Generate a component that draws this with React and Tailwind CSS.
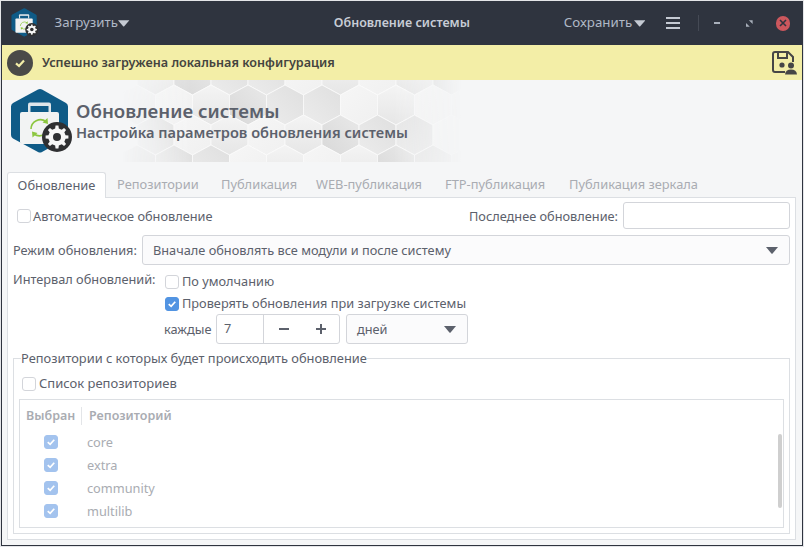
const gearPath = (cx, cy, r, teeth = 8) => {
    const pts = [];
    const step = (Math.PI * 2) / teeth;
    for (let i = 0; i < teeth; i++) {
        const a = i * step;
        const w = step * 0.2;
        pts.push([a - w * 1.35, r * 0.76], [a - w * 0.8, r], [a + w * 0.8, r], [a + w * 1.35, r * 0.76]);
    }
    const d = pts
        .map(([a, rad], i) => `${i ? "L" : "M"}${(cx + Math.cos(a) * rad).toFixed(2)} ${(cy + Math.sin(a) * rad).toFixed(2)}`)
        .join(" ");
    return d + " Z";
};

// the hexagon with bag, sync arrows and gear
const AppIcon = ({ className }) => (
    <svg viewBox="0 0 62 66" className={className}>
        <path d="M28 1.5 Q30 .5 32 1.5 L56 15 Q58 16 58 18.5 L58 47 Q58 49.5 56 50.5 L32 64 Q30 65 28 64 L3 50.5 Q1 49.5 1 47 L1 18.5 Q1 16 3 15 Z" fill="#0f5b87" />
        <path d="M18 24 V16.5 Q18 14.5 20 14.5 H39 Q41 14.5 41 16.5 V24" fill="#dfe6ea" />
        <rect x="20.5" y="18" width="18" height="6" fill="#0f5b87" />
        <rect x="10" y="24" width="39" height="32" rx="2" fill="#f2f3f3" />
        <path d="M21 41 A9.5 9.5 0 0 1 36 33.5" fill="none" stroke="#8cc63f" strokeWidth="1.6" />
        <path d="M39 38 A9.5 9.5 0 0 1 24 46" fill="none" stroke="#8cc63f" strokeWidth="1.6" />
        <path d="M37.5 30 L38 36 L32.5 34.5 Z M22.5 49.5 L22 43.5 L27.5 45 Z" fill="#8cc63f" />
        <circle cx="47" cy="49" r="15" fill="#2f3032" />
        <path d={gearPath(47, 49, 11.5)} fill="#f7f7f7" />
        <circle cx="47" cy="49" r="4" fill="#2f3032" />
    </svg>
);

// grey hexagon wallpaper behind the banner title
const fills = ["url(#hexA)", "url(#hexB)", "url(#hexC)", "url(#hexA)", "url(#hexD)", "url(#hexB)", "url(#hexD)"];
const hexes = [];
[75, 105, 135, 165].forEach((y, row) => {
    for (let i = 0; i < 10; i++) {
        hexes.push({ x: 135 + (row % 2 ? 0 : 18.5) + i * 37, y, fill: fills[(i * 2 + row * 3) % fills.length] });
    }
});

const hexPoints = (x, y) => {
    const w = 18.5, h = 20;
    return `${x},${y - h} ${x + w},${y - h / 2} ${x + w},${y + h / 2} ${x},${y + h} ${x - w},${y + h / 2} ${x - w},${y - h / 2}`;
};

const Wallpaper = () => (
    <svg viewBox="120 80 340 82" className="absolute left-[120px] top-0 w-[340px] h-[82px]">
        <defs>
            <linearGradient id="fade" x1="0" x2="1" y1="0" y2="0">
                <stop offset="0" stopColor="white" stopOpacity="0" />
                <stop offset="0.2" stopColor="white" stopOpacity="1" />
                <stop offset="0.8" stopColor="white" stopOpacity="1" />
                <stop offset="1" stopColor="white" stopOpacity="0" />
            </linearGradient>
            <linearGradient id="hexA" x1="0" x2="0" y1="0" y2="1">
                <stop offset="0" stopColor="#f4f4f4" />
                <stop offset="1" stopColor="#e6e6e6" />
            </linearGradient>
            <linearGradient id="hexB" x1="0" x2="1" y1="0" y2="1">
                <stop offset="0" stopColor="#f6f6f6" />
                <stop offset="1" stopColor="#f0f0f0" />
            </linearGradient>
            <linearGradient id="hexC" x1="1" x2="0" y1="0" y2="1">
                <stop offset="0" stopColor="#e9e9e9" />
                <stop offset="1" stopColor="#d8d8d8" />
            </linearGradient>
            <linearGradient id="hexD" x1="0" x2="1" y1="1" y2="0">
                <stop offset="0" stopColor="#ececec" />
                <stop offset="1" stopColor="#dfdfdf" />
            </linearGradient>
            <mask id="fadeMask">
                <rect x="120" y="80" width="340" height="82" fill="url(#fade)" />
            </mask>
        </defs>
        <g mask="url(#fadeMask)">
            {hexes.map((h) => (
                <polygon key={`${h.x}-${h.y}`} points={hexPoints(h.x, h.y)} fill={h.fill} stroke="#fafafa" strokeWidth="0.8" />
            ))}
        </g>
    </svg>
);

const Caret = ({ className }) => (
    <svg viewBox="0 0 12 7" className={className}>
        <path d="M0 0 H12 L6.6 6.4 Q6 7 5.4 6.4 Z" fill="currentColor" />
    </svg>
);

const Check = ({ checked, dim, className = "" }) => (
    <span
        className={`flex items-center justify-center w-[14px] h-[14px] rounded-[3px] shrink-0 border ${
            checked
                ? dim
                    ? "bg-[#a3c3ee] border-[#a3c3ee]"
                    : "bg-[#5294e2] border-[#5294e2]"
                : "bg-white border-[#d3d5da]"
        } ${className}`}
    >
        {checked && (
            <svg viewBox="0 0 14 14" className="w-[12px] h-[12px]">
                <path d="M3.2 7.2 L6 9.8 L10.8 4.4" fill="none" stroke="white" strokeWidth="2" />
            </svg>
        )}
    </span>
);

const tabs = [
    { label: "Репозитории", width: "w-[104px]" },
    { label: "Публикация", width: "w-[95px]" },
    { label: "WEB-публикация", width: "w-[129px]" },
    { label: "FTP-публикация", width: "w-[124px]" },
    { label: "Публикация зеркала", width: "w-[147px]" },
];
const repos = ["core", "extra", "community", "multilib"];

export default function App() {
    return (
        <div className="w-[804px] h-[547px] p-px bg-[#e4e5e8]">
            <div
                className="h-full overflow-hidden flex flex-col bg-[#f5f6f7] text-[#5c616c] text-[12.75px] border-l border-r border-b border-[#2f343f]"
                style={{ fontFamily: '"Noto Sans", sans-serif' }}
            >
                {/* Title bar */}
                <header className="h-[44px] shrink-0 bg-[#2f343f] flex items-center pl-[9px] pr-[12px] text-[#afb8c6]">
                    <AppIcon className="w-[29px] h-[31px] mb-[1px]" />
                    <span className="ml-[16px] w-[62px] text-[13.3px] whitespace-nowrap">Загрузить</span>
                    <Caret className="w-[12px] h-[7px] ml-[2px] text-[#c5cad3]" />
                    <span className="ml-[204px] w-[135px] text-center whitespace-nowrap text-[12.5px] font-semibold text-[#c7ccd5]">Обновление системы</span>
                    <span className="ml-[95px] w-[68px] text-[13.3px] whitespace-nowrap">Сохранить</span>
                    <Caret className="w-[12px] h-[7px] ml-[2px] text-[#c5cad3]" />
                    <div className="ml-[21px] w-[14px] flex flex-col gap-[3px]">
                        <span className="h-[2px] bg-[#c5cad3]" />
                        <span className="h-[2px] bg-[#c5cad3]" />
                        <span className="h-[2px] bg-[#c5cad3]" />
                    </div>
                    <span className="ml-[18px] w-px h-[16px] bg-[#454a55]" />
                    <span className="ml-[16px] w-[6px] h-[2px] bg-[#a9b0bb]" />
                    <svg viewBox="0 0 7 7" className="ml-[26px] w-[7px] h-[7px]">
                        <path d="M0 7 V3 L4 7 Z M7 0 V4 L3 0 Z" fill="#a9b0bb" />
                    </svg>
                    <div className="ml-[23px] w-[15px] h-[15px] rounded-full bg-[#cc575d] flex items-center justify-center">
                        <svg viewBox="0 0 8 8" className="w-[8px] h-[8px]">
                            <path d="M1 1 L7 7 M7 1 L1 7" stroke="#2f343f" strokeWidth="1.6" />
                        </svg>
                    </div>
                </header>

                {/* Message bar */}
                <div className="h-[35px] shrink-0 bg-[#f3eea7] flex items-center pl-[5px] pr-[5px] text-[#44443f]">
                    <div className="w-[26px] h-[26px] rounded-full bg-[#4a4a48] flex items-center justify-center">
                        <svg viewBox="0 0 14 14" className="w-[14px] h-[14px]">
                            <path d="M3 7.4 L6 10 L11 4.4" fill="none" stroke="#f3eea7" strokeWidth="2.2" />
                        </svg>
                    </div>
                    <span className="ml-[9px] font-semibold text-[12.6px] mt-[2px]">Успешно загружена локальная конфигурация</span>
                    <svg viewBox="0 0 26 26" className="ml-auto w-[26px] h-[26px]">
                        <path d="M14 22 H4 Q2 22 2 20 V4 Q2 2 4 2 H17 L22 7 V12" fill="none" stroke="#464646" strokeWidth="2" />
                        <path d="M7 2.5 V8 H16 V2.5" fill="none" stroke="#464646" strokeWidth="2" />
                        <circle cx="11" cy="15" r="2.6" fill="#464646" />
                        <circle cx="20" cy="15.5" r="3" fill="#464646" />
                        <path d="M14 24.5 Q14.5 19.5 20 19.5 Q25.5 19.5 26 24.5 Z" fill="#464646" />
                    </svg>
                </div>

                {/* Banner */}
                <div className="relative h-[85px] shrink-0 flex items-start pl-[8px] pt-[8px]">
                    <Wallpaper />
                    <AppIcon className="relative w-[62px] h-[66px] shrink-0" />
                    <div className="relative ml-[4px] mt-[11px] whitespace-nowrap font-semibold">
                        <div className="text-[18.7px] leading-[24px]">Обновление системы</div>
                        <div className="text-[14.6px] leading-[18px]">Настройка параметров обновления системы</div>
                    </div>
                </div>

                {/* Tabs */}
                <div className="shrink-0 mt-[7px] ml-[5px] mr-[6px] flex items-end h-[25px] relative z-10 text-[12.85px]">
                    <div className="h-[26px] w-[99px] -mb-px bg-white border border-b-0 border-[#dcdfe3] rounded-t-[3px] flex items-center justify-center">Обновление</div>
                    {tabs.map((t) => (
                        <div key={t.label} className={`h-[25px] pl-[11px] flex items-center text-[#a9acb2] whitespace-nowrap ${t.width}`}>
                            {t.label}
                        </div>
                    ))}
                </div>

                <main className="flex-1 min-h-0 ml-[5px] mr-[6px] mb-[5px] bg-white border border-[#dcdfe3] flex flex-col px-[5px]">
                    <div className="flex items-center h-[27px] mt-[4px] pl-[4px]">
                        <Check />
                        <span className="ml-[2px] mt-[2px]">Автоматическое обновление</span>
                        <span className="ml-auto mt-[2px]">Последнее обновление:</span>
                        <div className="ml-[5px] w-[167px] h-[27px] bg-white border border-[#d3d5da] rounded-[3px]" />
                    </div>

                    <div className="flex items-center h-[30px] mt-[6px]">
                        <span className="w-[124px] whitespace-nowrap mt-[2px]">Режим обновления:</span>
                        <div className="ml-[5px] flex-1 h-[30px] bg-[#fbfbfc] border border-[#d3d5da] rounded-[3px] flex items-center pl-[10px] pr-[11px]">
                            <span className="mt-[2px]">Вначале обновлять все модули и после систему</span>
                            <Caret className="ml-auto w-[12px] h-[7px] text-[#5c616c]" />
                        </div>
                    </div>

                    <div className="flex mt-[10px]">
                        <span className="w-[144px] leading-[18px] -mt-[5px] whitespace-nowrap">Интервал обновлений:</span>
                        <div className="ml-[7px] flex flex-col">
                            <div className="flex items-center h-[14px] ml-[1px]">
                                <Check />
                                <span className="ml-[3px]">По умолчанию</span>
                            </div>
                            <div className="flex items-center h-[14px] mt-[8px] ml-[1px]">
                                <Check checked />
                                <span className="ml-[3px]">Проверять обновления при загрузке системы</span>
                            </div>
                            <div className="flex items-center h-[30px] mt-[3px]">
                                <span className="w-[52px] mt-[2px]">каждые</span>
                                <div className="w-[124px] h-[30px] border border-[#d3d5da] rounded-[3px] flex items-center">
                                    <span className="w-[47px] pl-[7px] h-full flex items-center border-r border-[#d3d5da]">7</span>
                                    <div className="flex-1 flex items-center justify-around pl-[1px]">
                                        <span className="w-[10px] h-[2px] bg-[#5c616c]" />
                                        <span className="relative w-[10px] h-[10px]">
                                            <span className="absolute left-0 top-[4px] w-[10px] h-[2px] bg-[#5c616c]" />
                                            <span className="absolute left-[4px] top-0 w-[2px] h-[10px] bg-[#5c616c]" />
                                        </span>
                                    </div>
                                </div>
                                <div className="ml-[6px] w-[122px] h-[30px] bg-[#fbfbfc] border border-[#d3d5da] rounded-[3px] flex items-center pl-[10px] pr-[11px]">
                                    <span className="mt-[2px]">дней</span>
                                    <Caret className="ml-auto w-[12px] h-[7px] text-[#5c616c]" />
                                </div>
                            </div>
                        </div>
                    </div>

                    {/* Repositories group */}
                    <fieldset className="mt-[5px] h-[185px] border border-[#dcdfe3] pl-[5px] pr-[5px] min-w-0">
                        <legend className="ml-[2px] px-0 leading-[18px] text-[12.85px]">Репозитории с которых будет происходить обновление</legend>
                        <div className="flex items-center h-[14px] mt-[10px] ml-[3px]">
                            <Check />
                            <span className="ml-[3px] text-[13px]">Список репозиториев</span>
                        </div>
                        <div className="relative mt-[8px] h-[129px] border border-[#dcdfe3] overflow-hidden">
                            <div className="flex items-center h-[24px] mt-[4px] ml-[6px] text-[12.5px] font-semibold text-[#a9acb2]">
                                <span className="w-[56px] h-[18px] flex items-center border-r border-[#e3e5e8]">Выбран</span>
                                <span className="ml-[7px]">Репозиторий</span>
                            </div>
                            <div className="mt-[7px] flex flex-col gap-[9px]">
                                {[...repos, ""].map((r) => (
                                    <div key={r} className="flex items-center h-[14px] text-[#a9acb2]">
                                        <Check checked dim className="ml-[24px]" />
                                        <span className="ml-[29px] mt-[2px]">{r}</span>
                                    </div>
                                ))}
                            </div>
                            {/* scrollbar thumb */}
                            <span className="absolute right-[1px] top-[34px] w-[4px] h-[74px] rounded-full bg-[#cfcfcf]" />
                        </div>
                    </fieldset>
                </main>
            </div>
        </div>
    );
}
